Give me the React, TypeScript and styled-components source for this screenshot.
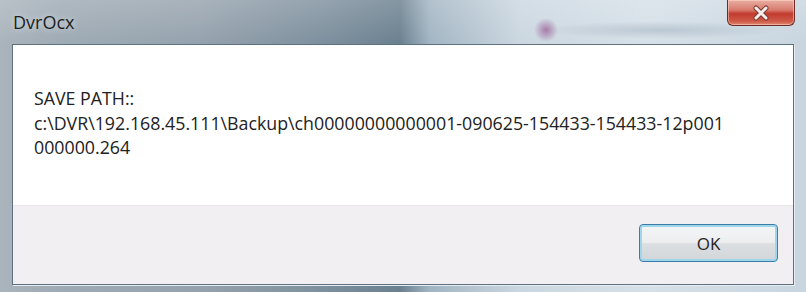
import React, { ReactElement } from 'react';
import styled, { createGlobalStyle } from 'styled-components';

const GlobalStyle = createGlobalStyle`
  html, body {
    margin: 0;
    padding: 0;
    background: #8a9aa8;
  }
`;

const message = {
  title: 'DvrOcx',
  lines: [
    'SAVE PATH::',
    'c:\\DVR\\192.168.45.111\\Backup\\ch00000000000001-090625-154433-154433-12p001',
    '000000.264',
  ],
};

export default function App(): ReactElement {
  return (
    <>
      <GlobalStyle />
      <Window>
        <TitleBar>
          <Title>{message.title}</Title>
          <CloseButton aria-label="close">
            <svg width="22" height="16" viewBox="0 0 22 16">
              <path d="M6 3 L16 13 M16 3 L6 13" stroke="#7d3a33" strokeWidth="5" strokeLinecap="round" />
              <path d="M6 3 L16 13 M16 3 L6 13" stroke="#f4eeec" strokeWidth="3" strokeLinecap="round" />
            </svg>
          </CloseButton>
        </TitleBar>
        <Client>
          <MessageArea>
            {message.lines.map((line) => (
              <Line key={line}>{line}</Line>
            ))}
          </MessageArea>
          <ButtonArea>
            <OkButton>OK</OkButton>
          </ButtonArea>
        </Client>
      </Window>
    </>
  );
}

const Window = styled.div`
  width: 806px;
  height: 292px;
  box-sizing: border-box;
  display: flex;
  flex-direction: column;
  padding: 0 12px 7px 12px;
  font-family: 'Open Sans', 'Noto Sans', sans-serif;
  background:
    radial-gradient(ellipse 12px 12px at 546px 30px, rgba(140, 60, 130, 0.6), rgba(140, 60, 130, 0) 100%),
    radial-gradient(ellipse 120px 9px at 660px 30px, rgba(120, 140, 160, 0.3), rgba(120, 140, 160, 0) 100%),
    linear-gradient(180deg, rgba(255, 255, 255, 0.18) 0px, rgba(255, 255, 255, 0) 44px),
    linear-gradient(90deg, #aab4bc 0px, #9eaab4 60px, #95a2ad 200px, #7e909e 320px, #6b808f 400px, #a2b5c3 430px, #cbd7e0 520px, #d6e0e8 650px, #c8d5df 806px);
`;

const TitleBar = styled.div`
  height: 44px;
  display: flex;
  justify-content: space-between;
  align-items: flex-start;
  margin-right: -1px;
`;

const Title = styled.div`
  padding: 10px 0 0 1px;
  font-size: 18px;
  color: #1a1f25;
  text-shadow: 0 0 6px rgba(255, 255, 255, 0.7);
`;

const CloseButton = styled.div`
  width: 68px;
  height: 26px;
  box-sizing: border-box;
  display: flex;
  align-items: center;
  justify-content: center;
  border: 1px solid #6e2a24;
  border-top: none;
  border-radius: 0 0 6px 6px;
  background: linear-gradient(180deg, #e9b0a4 0%, #d77a6c 40%, #c13b2e 55%, #cf5a48 85%, #e08a72 100%);
  box-shadow: inset 0 0 0 1px rgba(255, 220, 210, 0.5);
`;

const Client = styled.div`
  flex: 1;
  display: flex;
  flex-direction: column;
  border: 1px solid #5f7080;
  box-shadow: 1px 1px 0 #e7eef3;
`;

const MessageArea = styled.div`
  height: 161px;
  box-sizing: border-box;
  padding: 41px 0 0 21px;
  background: #ffffff;
  border-bottom: 1px solid #e9e6ea;
`;

const Line = styled.div`
  font-size: 17.8px;
  line-height: 24.5px;
  color: #222222;
  white-space: nowrap;
`;

const ButtonArea = styled.div`
  flex: 1;
  display: flex;
  justify-content: flex-end;
  align-items: flex-start;
  padding: 18px 15px 0 0;
  background: #f2eff3;
`;

const OkButton = styled.div`
  width: 139px;
  height: 38px;
  box-sizing: border-box;
  display: flex;
  align-items: center;
  justify-content: center;
  font-size: 17px;
  color: #222222;
  border: 1px solid #3a7ea8;
  border-radius: 4px;
  background: linear-gradient(180deg, #f4f5f6 0%, #eceeef 48%, #dcdfe1 52%, #d2d6d8 100%);
  box-shadow: inset 0 0 0 2px #9fd6ec;
`;
